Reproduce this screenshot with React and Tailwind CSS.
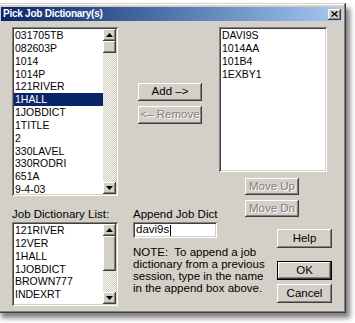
import React from 'react'

const RAISED = 'bg-[#d4d0c8] shadow-[inset_-1px_-1px_#404040,inset_1px_1px_#ffffff,inset_-2px_-2px_#808080,inset_2px_2px_#d4d0c8]'
const SUNKEN = 'bg-white shadow-[inset_1px_1px_#808080,inset_-1px_-1px_#ffffff,inset_2px_2px_#404040,inset_-2px_-2px_#d4d0c8]'

function Tri({ down }) {
  return (
    <svg width="7" height="4" viewBox="0 0 7 4">
      <path d={down ? 'M0 0h7L3.5 4z' : 'M3.5 0L7 4H0z'} fill="#000" />
    </svg>
  )
}

function ScrollBtn({ down }) {
  return (
    <div className={`h-[12px] w-[13px] shrink-0 flex items-center justify-center ${RAISED}`}>
      <Tri down={down} />
    </div>
  )
}

function ListBox({ items, selected, w, h, thumb }) {
  return (
    <div className={`${SUNKEN} ${w} ${h} p-[2px] flex overflow-hidden`}>
      <div className="flex-1 overflow-hidden">
        {items.map(t => (
          <div
            key={t}
            className={`h-[12.85px] leading-[12.85px] text-[10.5px] pl-[1px] whitespace-nowrap
              ${t === selected ? 'bg-[#0a246a] text-white' : 'text-black'}`}
          >
            {t}
          </div>
        ))}
      </div>
      {thumb && (
        <div className="w-[13px] flex flex-col">
          <ScrollBtn />
          <div className={`${thumb} w-[13px] shrink-0 ${RAISED}`} />
          <div className="flex-1 bg-[image:repeating-conic-gradient(#d4d0c8_0_25%,#f6f5f2_0_50%)] bg-[length:2px_2px]" />
          <ScrollBtn down />
        </div>
      )}
    </div>
  )
}

function Btn({ children, disabled, className = '' }) {
  return (
    <div className={`${RAISED} ${className} flex items-center justify-center text-[11.5px] whitespace-nowrap
      ${disabled ? 'text-[#808080] [text-shadow:1px_1px_0_#ffffff]' : 'text-black'}`}>
      {children}
    </div>
  )
}

const LEFT = ['031705TB', '082603P', '1014', '1014P', '121RIVER', '1HALL', '1JOBDICT', '1TITLE', '2', '330LAVEL', '330RODRI', '651A', '9-4-03']
const PICKED = ['DAVI9S', '1014AA', '101B4', '1EXBY1']
const DICTS = ['121RIVER', '12VER', '1HALL', '1JOBDICT', 'BROWN777', 'INDEXRT']

export default function App() {
  return (
    <div className="w-[355px] h-[323px] bg-white overflow-hidden pt-[3px] font-['Liberation_Sans',Arial,sans-serif]">
      <div className="-ml-[3px] w-[349px] h-[310px] bg-[#d4d0c8] p-[4px] flex flex-col
        shadow-[inset_-1px_-1px_#404040,inset_1px_1px_#d4d0c8,inset_-2px_-2px_#808080,inset_2px_2px_#ffffff,4px_5px_5px_rgba(0,0,0,0.5)]">
        {/* title bar */}
        <div className="h-[14px] shrink-0 bg-linear-to-r from-[#0a246a] to-[#a6caf0] flex items-center justify-between pl-[2px] pr-[1px]">
          <span className="text-white font-bold text-[10px] tracking-[-0.25px] leading-none">Pick Job Dictionary(s)</span>
          <div className={`${RAISED} w-[13px] h-[11px] flex items-center justify-center`}>
            <svg width="7" height="6" viewBox="0 0 7 6">
              <path d="M0.5 0.5L6.5 5.5M6.5 0.5L0.5 5.5" stroke="#000" strokeWidth="1.4" />
            </svg>
          </div>
        </div>

        <div className="flex pl-[11px] pt-[6px]">
          {/* left column */}
          <div className="flex flex-col w-[106px]">
            <ListBox items={LEFT} selected="1HALL" w="w-[106px]" h="h-[169px]" thumb="h-[12px]" />
            <div className="mt-[12px] h-[13px] leading-[13px] text-[11.5px] whitespace-nowrap">Job Dictionary List:</div>
            <div className="mt-[1px]">
              <ListBox items={DICTS} w="w-[106px]" h="h-[84px]" thumb="h-[35px]" />
            </div>
          </div>

          {/* middle column */}
          <div className="ml-[15px] w-[84px] flex flex-col">
            <Btn className="mt-[56px] ml-[5px] w-[64px] h-[18px]">Add –&gt;</Btn>
            <Btn disabled className="mt-[5px] ml-[5px] w-[64px] h-[18px]">&lt;– Remove</Btn>
            <div className="mt-[84px] h-[13px] leading-[13px] text-[11.5px] whitespace-nowrap">Append Job Dict</div>
            <div className={`${SUNKEN} mt-[1px] w-[84px] h-[16px] flex items-center pl-[3px] text-[11.5px]`}>
              davi9s<span className="inline-block w-[1px] h-[11px] bg-black ml-[1px]" />
            </div>
            <div className="mt-[8px] w-[140px] text-[11.5px] leading-[12px] whitespace-nowrap">
              <div>NOTE:&nbsp; To append a job</div>
              <div>dictionary from a previous</div>
              <div>session, type in the name</div>
              <div>in the append box above.</div>
            </div>
          </div>

          {/* right column */}
          <div className="ml-[2px] w-[113px] flex flex-col">
            <div className={`${SUNKEN} w-[108px] h-[145px] p-[2px]`}>
              {PICKED.map(t => (
                <div key={t} className="h-[12.85px] leading-[12.85px] text-[10.5px] pl-[1px]">{t}</div>
              ))}
            </div>
            <Btn disabled className="mt-[6px] ml-[26px] w-[54px] h-[17px]">Move Up</Btn>
            <Btn disabled className="mt-[5px] ml-[26px] w-[54px] h-[17px]">Move Dn</Btn>
            <Btn className="mt-[12px] ml-[58px] w-[55px] h-[19px]">Help</Btn>
            <div className="mt-[13px] ml-[58px] w-[55px] h-[19px] border border-black">
              <Btn className="w-full h-full">OK</Btn>
            </div>
            <Btn className="mt-[4px] ml-[58px] w-[55px] h-[19px]">Cancel</Btn>
          </div>
        </div>
      </div>
    </div>
  )
}
